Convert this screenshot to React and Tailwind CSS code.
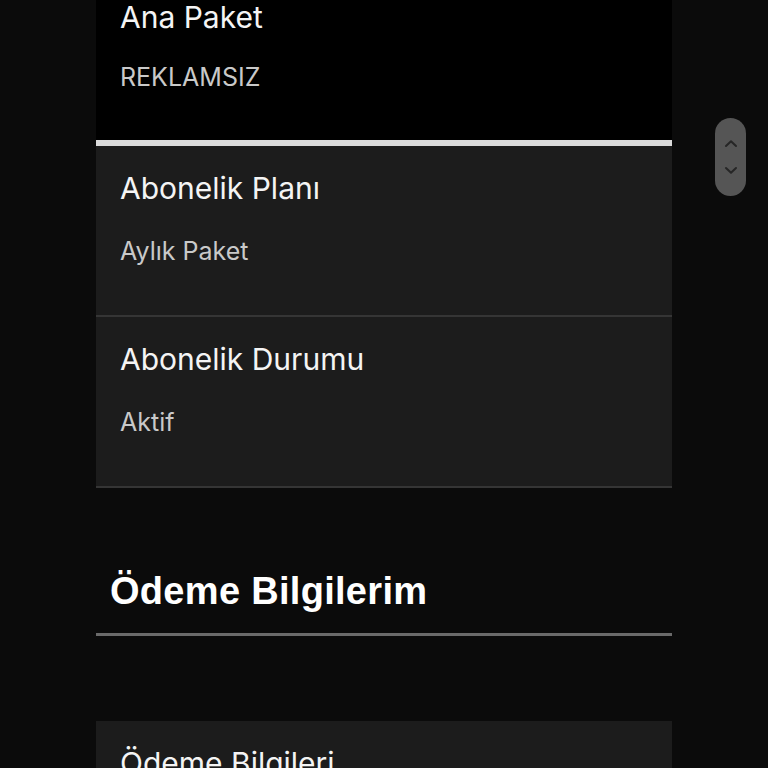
import React from 'react';

const rows = [
  { title: 'Abonelik Planı', value: 'Aylık Paket' },
  { title: 'Abonelik Durumu', value: 'Aktif' },
];

function InfoCard({ title, value, className = '' }) {
  return (
    <div className={`px-6 pt-[24px] pb-[49px] ${className}`}>
      <p className="text-[30px] leading-[36px] text-[#f4f4f4]">{title}</p>
      <p className="mt-[30px] text-[25px] leading-[30px] text-[#c9c9c9]">{value}</p>
    </div>
  );
}

export default function App() {
  return (
    <div
      className="relative h-[768px] overflow-hidden bg-[#0b0b0b]"
      style={{ fontFamily: 'Inter, "Noto Sans", sans-serif' }}
    >
      <div className="mx-auto w-[576px] -mt-[24px]">
        {/* current package */}
        <div className="px-6 pt-[23px] pb-[48px] bg-black border-b-[6px] border-[#dadada]">
          <p className="text-[30px] leading-[36px] text-[#f4f4f4]">Ana Paket</p>
          <p className="mt-[27px] text-[25px] leading-[30px] text-[#c9c9c9]">REKLAMSIZ</p>
        </div>

        {rows.map(r => (
          <InfoCard
            key={r.title}
            title={r.title}
            value={r.value}
            className="bg-[#1c1c1c] border-b-2 border-[#353535]"
          />
        ))}

        {/* payment section */}
        <div className="mt-[81px] border-b-[3px] border-[#6a6a6a] pl-[14px] pb-[20px]">
          <h2
            className="text-[38px] leading-[44px] font-bold tracking-[0.3px] text-white"
            style={{ fontFamily: '"Liberation Sans", Arial, sans-serif' }}
          >
            Ödeme Bilgilerim
          </h2>
        </div>

        <InfoCard
          title="Ödeme Bilgileri"
          value="Kredi Kartı"
          className="mt-[85px] bg-[#1c1c1c] border-b-2 border-[#353535]"
        />
      </div>

      {/* scroll control */}
      <div className="absolute left-[715px] top-[118px] w-[31px] h-[78px] rounded-full bg-[#555555] flex flex-col items-center justify-center gap-[18px]">
        <svg width="14" height="9" viewBox="0 0 14 9" fill="none" stroke="#262626" strokeWidth="2" strokeLinecap="round" strokeLinejoin="round">
          <path d="M2 7L7 2.2L12 7" />
        </svg>
        <svg width="14" height="9" viewBox="0 0 14 9" fill="none" stroke="#262626" strokeWidth="2" strokeLinecap="round" strokeLinejoin="round">
          <path d="M2 2L7 6.8L12 2" />
        </svg>
      </div>
    </div>
  );
}
